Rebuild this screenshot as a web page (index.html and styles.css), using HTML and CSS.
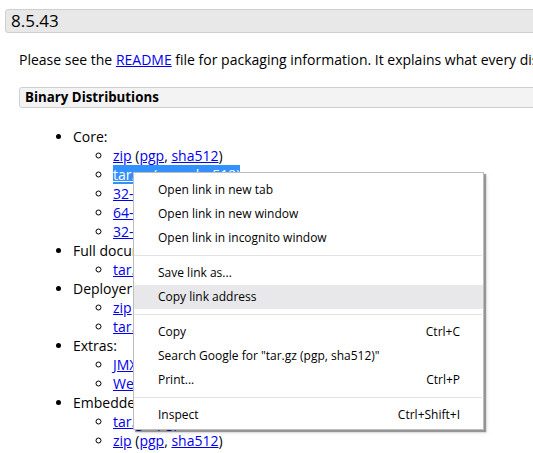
FILE: index.html
```html
<!DOCTYPE html>
<html>
<head>
<meta charset="utf-8">
<link rel="stylesheet" href="styles.css">
</head>
<body>
<div class="page">
  <h3 class="version">8.5.43</h3>
  <div class="section">
    <p class="intro">Please see the <a href="#">README</a> file for packaging information. It explains what every distribution contains.</p>
    <h4 class="subhead">Binary Distributions</h4>
    <ul class="dist">
      <li>Core:
        <ul>
          <li><a href="#">zip</a> (<a href="#">pgp</a>, <a href="#">sha512</a>)</li>
          <li><span class="sel"><a href="#">tar.gz</a> (<a href="#">pgp</a>, <a href="#">sha512</a>)</span></li>
          <li><a href="#">32-bit Windows zip</a> (<a href="#">pgp</a>, <a href="#">sha512</a>)</li>
          <li><a href="#">64-bit Windows zip</a> (<a href="#">pgp</a>, <a href="#">sha512</a>)</li>
          <li><a href="#">32-bit/64-bit Windows Service Installer</a> (<a href="#">pgp</a>, <a href="#">sha512</a>)</li>
        </ul>
      </li>
      <li>Full documentation:
        <ul>
          <li><a href="#">tar.gz</a> (<a href="#">pgp</a>, <a href="#">sha512</a>)</li>
        </ul>
      </li>
      <li>Deployer:
        <ul>
          <li><a href="#">zip</a> (<a href="#">pgp</a>, <a href="#">sha512</a>)</li>
          <li><a href="#">tar.gz</a> (<a href="#">pgp</a>, <a href="#">sha512</a>)</li>
        </ul>
      </li>
      <li>Extras:
        <ul>
          <li><a href="#">JMX Remote jar</a> (<a href="#">pgp</a>, <a href="#">sha512</a>)</li>
          <li><a href="#">Web services jar</a> (<a href="#">pgp</a>, <a href="#">sha512</a>)</li>
        </ul>
      </li>
      <li>Embedded:
        <ul>
          <li><a href="#">tar.gz</a> (<a href="#">pgp</a>, <a href="#">sha512</a>)</li>
          <li><a href="#">zip</a> (<a href="#">pgp</a>, <a href="#">sha512</a>)</li>
        </ul>
      </li>
    </ul>
  </div>
</div>

<div class="menu">
  <div class="item"><span>Open link in new tab</span></div>
  <div class="item"><span>Open link in new window</span></div>
  <div class="item"><span>Open link in incognito window</span></div>
  <div class="sep"></div>
  <div class="item"><span>Save link as...</span></div>
  <div class="item hover"><span>Copy link address</span></div>
  <div class="sep"></div>
  <div class="item"><span>Copy</span><span>Ctrl+C</span></div>
  <div class="item"><span>Search Google for "tar.gz (pgp, sha512)"</span></div>
  <div class="item"><span>Print...</span><span>Ctrl+P</span></div>
  <div class="sep"></div>
  <div class="item"><span>Inspect</span><span>Ctrl+Shift+I</span></div>
</div>
</body>
</html>
```

FILE: styles.css
```css
html, body {
  margin: 0;
  padding: 0;
  overflow: hidden;
  background: #fff;
}

body {
  font-family: "Open Sans", "Noto Sans", sans-serif;
  font-size: 14px;
  color: #000;
  width: 533px;
  height: 453px;
  position: relative;
}

.page {
  width: 1000px;
  padding: 9px 0 0 5px;
}

.version {
  margin: 0;
  height: 22px;
  line-height: 22px;
  font-size: 17px;
  font-weight: normal;
  background: #e8e8e8;
  border: 1px solid #cfcfcf;
  border-radius: 3px;
  padding-left: 5px;
}

.section {
  padding-left: 14px;
}

.intro {
  margin: 17px 0 0 0;
  line-height: 19px;
  white-space: nowrap;
}

a {
  color: #0000ee;
  text-decoration: underline;
}

.subhead {
  margin: 18px 0 0 0;
  font-size: 13.3px;
  font-weight: bold;
  line-height: 19px;
  background: #f3f3f3;
  border: 1px solid #cfcfcf;
  border-radius: 3px;
  padding-left: 5px;
}

.dist {
  margin: 19px 0 0 0;
  padding-left: 54px;
  line-height: 19px;
}

.dist ul {
  margin: 0;
  padding-left: 40px;
}

.dist li {
  white-space: nowrap;
}

.sel {
  background: #3390ff;
  color: #fff;
}

.sel a {
  color: #fff;
}

.menu {
  position: absolute;
  left: 133px;
  top: 172px;
  width: 349px;
  padding: 5px 0 2px 0;
  background: #fff;
  border: 1px solid #bdbdbd;
  box-shadow: 2px 2px 1px rgba(0, 0, 0, 0.35), 3px 3px 3px rgba(0, 0, 0, 0.12);
  font-family: "Open Sans", "Noto Sans", sans-serif;
  font-size: 12px;
  color: #000;
}

.item {
  display: flex;
  justify-content: space-between;
  height: 24px;
  line-height: 24px;
  padding: 0 23px 0 24px;
}

.item.hover {
  background: #e8e8ea;
}

.sep {
  height: 1px;
  background: #e3e3e3;
  margin: 5px 1px 5px 0;
}
```
